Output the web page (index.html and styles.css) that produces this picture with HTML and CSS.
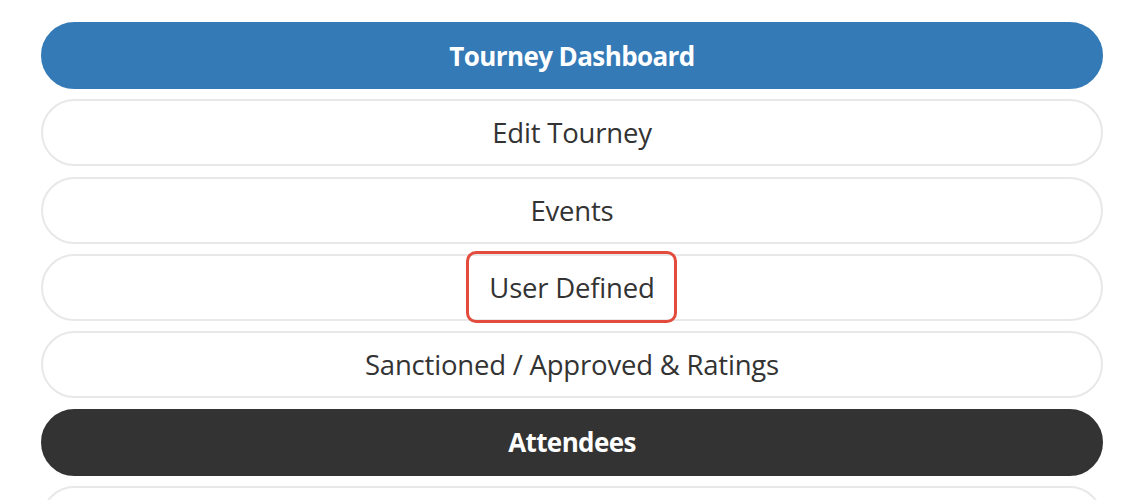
FILE: index.html
```html
<!DOCTYPE html>
<html>
<head>
<meta charset="utf-8">
<link rel="stylesheet" href="styles.css">
</head>
<body>
<nav class="menu">
  <a class="item item-primary">Tourney Dashboard</a>
  <a class="item">Edit Tourney</a>
  <a class="item">Events</a>
  <a class="item"><span class="highlight">User Defined</span></a>
  <a class="item">Sanctioned / Approved &amp; Ratings</a>
  <a class="item item-dark">Attendees</a>
  <a class="item"></a>
</nav>
</body>
</html>
```
FILE: styles.css
```css
html, body {
  margin: 0;
  padding: 0;
  background: #ffffff;
}
body {
  font-family: "Open Sans", "Noto Sans", sans-serif;
  overflow: hidden;
  height: 500px;
}
.menu {
  display: flex;
  flex-direction: column;
  gap: 10.33px;
  padding: 22px 38px 0 41px;
}
.item {
  display: flex;
  align-items: center;
  justify-content: center;
  box-sizing: border-box;
  height: 67px;
  flex-shrink: 0;
  border: 2px solid #e8e8e8;
  border-radius: 34px;
  background: #ffffff;
  color: #333333;
  font-size: 27.5px;
  font-weight: 500;
  letter-spacing: -0.2px;
}
.item-primary {
  background: #337ab7;
  border-color: #337ab7;
  color: #ffffff;
  font-size: 26px;
  font-weight: 700;
  letter-spacing: -0.6px;
}
.item-dark {
  background: #333333;
  border-color: #333333;
  color: #ffffff;
  font-size: 26px;
  font-weight: 700;
  letter-spacing: -0.6px;
}
.highlight {
  position: relative;
}
.highlight::after {
  content: "";
  position: absolute;
  left: -23px;
  right: -22px;
  top: -18px;
  bottom: -17px;
  border: 3px solid #e34c3c;
  border-radius: 10px;
}
```
